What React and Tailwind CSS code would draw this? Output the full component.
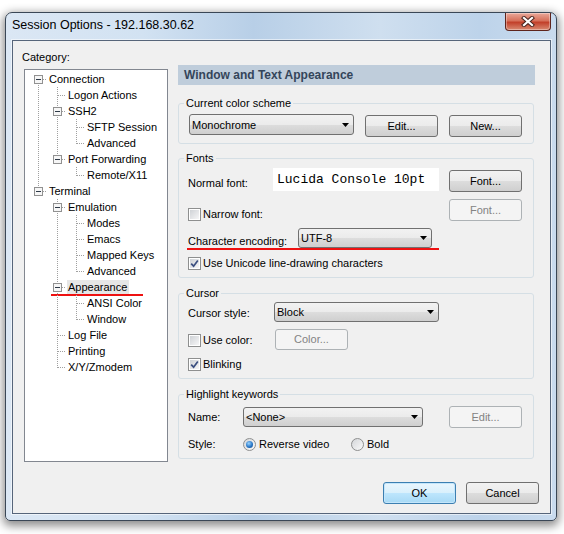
import React from 'react';

// Session Options dialog (Windows 7 look)

const treeRows = [
    { label: 'Connection', guides: [], join: 'first', box: true },
    { label: 'Logon Actions', guides: [true], join: 'tee' },
    { label: 'SSH2', guides: [true], join: 'tee', box: true },
    { label: 'SFTP Session', guides: [true, true], join: 'tee' },
    { label: 'Advanced', guides: [true, true], join: 'last' },
    { label: 'Port Forwarding', guides: [true], join: 'last', box: true },
    { label: 'Remote/X11', guides: [true, false], join: 'last' },
    { label: 'Terminal', guides: [], join: 'last', box: true },
    { label: 'Emulation', guides: [false], join: 'tee', box: true },
    { label: 'Modes', guides: [false, true], join: 'tee' },
    { label: 'Emacs', guides: [false, true], join: 'tee' },
    { label: 'Mapped Keys', guides: [false, true], join: 'tee' },
    { label: 'Advanced', guides: [false, true], join: 'last' },
    { label: 'Appearance', guides: [false], join: 'tee', box: true, selected: true },
    { label: 'ANSI Color', guides: [false, true], join: 'tee' },
    { label: 'Window', guides: [false, true], join: 'last' },
    { label: 'Log File', guides: [false], join: 'tee' },
    { label: 'Printing', guides: [false], join: 'tee' },
    { label: 'X/Y/Zmodem', guides: [false], join: 'last' },
];

const Guide = ({ on }) => (
    <svg width="19" height="16" className="shrink-0">
        {on && <line x1="10.5" y1="0" x2="10.5" y2="16" stroke="#a0a0a0" strokeDasharray="1 1" />}
    </svg>
);

const Joint = ({ join, box }) => {
    const y1 = join === 'first' ? 8 : 0;
    const y2 = join === 'last' ? 9 : 16;
    return (
        <svg width="19" height="16" className="shrink-0">
            <line x1="10.5" y1={y1} x2="10.5" y2={y2} stroke="#a0a0a0" strokeDasharray="1 1" />
            <line x1="11" y1="8.5" x2="19" y2="8.5" stroke="#a0a0a0" strokeDasharray="1 1" />
            {box && (
                <>
                    <rect x="6.5" y="4.5" width="8" height="8" fill="#f6f6f6" stroke="#919191" />
                    <line x1="8" y1="8.5" x2="13" y2="8.5" stroke="#2e3a48" />
                </>
            )}
        </svg>
    );
};

const TreeRow = ({ row }) => (
    <div className="relative flex h-[16px] items-center pl-[3px]">
        {row.guides.map((g, i) => <Guide key={i} on={g} />)}
        <Joint join={row.join} box={row.box} />
        <span className={`ml-[1px] pl-[1px] pr-[2px] leading-[14px] whitespace-nowrap ${row.selected ? 'bg-[#e6e6e6]' : ''}`}>
            {row.label}
        </span>
        {row.selected && <div className="absolute left-[26px] top-[15px] h-[2px] w-[92px] bg-[#ee1111]" />}
    </div>
);

const Combo = ({ value, className }) => (
    <div className={`flex items-center justify-between rounded-[3px] border border-[#707070] bg-[linear-gradient(#f2f2f2,#ebebeb_50%,#dddddd_50%,#cfcfcf)] pl-[2px] pr-[4px] ${className}`}>
        <span className="leading-[14px]">{value}</span>
        <svg width="7" height="4" className="shrink-0"><path d="M0 0H7L3.5 4Z" fill="#000" /></svg>
    </div>
);

const Button = ({ children, kind = 'normal', className }) => {
    const kinds = {
        normal: 'border-[#707070] bg-[linear-gradient(#f2f2f2,#ebebeb_50%,#dddddd_50%,#cfcfcf)] text-black',
        disabled: 'border-[#adb2b5] bg-[#f4f4f4] text-[#838383]',
        default: 'border-[#3c7fb1] bg-[linear-gradient(#eaf6fd,#d9f0fc_50%,#bee6fd_50%,#a7d9f5)] text-black shadow-[inset_0_0_0_1px_#c4e6fb]',
    };
    return (
        <div className={`flex items-center justify-center rounded-[3px] border ${kinds[kind]} ${className}`}>
            {children}
        </div>
    );
};

const Check = ({ checked, label }) => (
    <div className="flex items-center">
        <div className="h-[13px] w-[13px] shrink-0 border border-[#8e8f8f] bg-white p-[1px]">
            <div className="flex h-full w-full items-center justify-center bg-[linear-gradient(135deg,#cfd2d6,#f6f6f7)]">
                {checked && (
                    <svg width="9" height="9">
                        <path d="M1.2 4.6L3.6 7.2L7.8 1.4" fill="none" stroke="#3b4f80" strokeWidth="1.7" />
                    </svg>
                )}
            </div>
        </div>
        <span className="ml-[2px] leading-[13px]">{label}</span>
    </div>
);

const Radio = ({ on, label, className }) => (
    <div className={`flex items-center ${className}`}>
        <div className="flex h-[13px] w-[13px] shrink-0 items-center justify-center rounded-full border border-[#8e8f8f] bg-[linear-gradient(135deg,#d4d6d9,#fafafa)]">
            {on && <div className="h-[7px] w-[7px] rounded-full bg-[radial-gradient(circle_at_40%_35%,#9ad4ff,#2a78c8_55%,#0b3f80)]" />}
        </div>
        <span className="ml-[3px] leading-[13px]">{label}</span>
    </div>
);

const Group = ({ title, className, children }) => (
    <div className={`relative w-[356px] rounded-[3px] border border-[#d5dfe5] ${className}`}>
        <span className="absolute left-[5px] top-[-8px] bg-[#f0f0f0] px-[2px] leading-[14px]">{title}</span>
        {children}
    </div>
);

const CloseButton = () => (
    <div className="mr-[5px] flex h-[18px] w-[46px] items-center justify-center rounded-b-[4px] border border-t-0 border-[#5e241c] bg-[linear-gradient(#eaa99a,#d6705a_45%,#c2402a_55%,#d98a72)] shadow-[inset_0_0_0_1px_rgba(255,255,255,0.35)]">
        <svg width="14" height="11">
            <path d="M3 2L11 9M11 2L3 9" stroke="#4a2620" strokeWidth="4.2" strokeLinecap="square" />
            <path d="M3 2L11 9M11 2L3 9" stroke="#ffffff" strokeWidth="2.2" strokeLinecap="square" />
        </svg>
    </div>
);

export default function App() {
    return (
        <div className="h-[534px] w-[564px] overflow-hidden bg-white pl-[5px] pt-[12px] font-['Liberation_Sans',Arial,sans-serif] text-[11px] text-black">
            <div className="flex h-[509px] w-[552px] flex-col rounded-t-[7px] rounded-b-[5px] border border-[#3a4756] bg-[linear-gradient(90deg,#dbe7f4,#d2e2f2_25%,#b8cfe7_45%,#cfdfef_68%,#bdd3ea_86%,#c9dbee)] shadow-[0_3px_10px_2px_rgba(0,0,0,0.45)]">
                {/* Title bar */}
                <div className="flex h-[27px] items-start justify-between">
                    <span className="ml-[6px] mt-[4px] text-[12.5px] leading-[16px]">Session Options - 192.168.30.62</span>
                    <CloseButton />
                </div>

                {/* Client area */}
                <div className="ml-[6px] flex h-[474px] w-[539px] flex-col border border-[#56657a] bg-[#f0f0f0] shadow-[0_0_0_1px_rgba(255,255,255,0.55)]">
                    <div className="flex">
                        {/* Category tree */}
                        <div className="pl-[9px] pt-[9px]">
                            <div className="leading-[14px]">Category:</div>
                            <div className="ml-[2px] mt-[5px] h-[393px] w-[144px] border border-[#828790] bg-white pt-[1px]">
                                {treeRows.map((row, i) => <TreeRow key={i} row={row} />)}
                            </div>
                        </div>

                        {/* Settings panel */}
                        <div className="ml-[10px] w-[357px] pt-[24px]">
                            <div className="flex h-[20px] items-center bg-[#bfcddb] pl-[6px] text-[12px] font-bold text-[#34455a]">
                                Window and Text Appearance
                            </div>

                            <Group title="Current color scheme" className="mt-[18px] h-[41px] pl-[10px] pt-[10px]">
                                <div className="flex items-start">
                                    <Combo value="Monochrome" className="h-[21px] w-[165px]" />
                                    <Button className="ml-[11px] mt-[1px] h-[22px] w-[73px]">Edit...</Button>
                                    <Button className="ml-[11px] mt-[1px] h-[22px] w-[73px]">New...</Button>
                                </div>
                            </Group>

                            <Group title="Fonts" className="mt-[14px] h-[120px] pl-[9px] pr-[11px] pt-[9px]">
                                <div className="flex items-start">
                                    <span className="mt-[8px] w-[85px] leading-[14px]">Normal font:</span>
                                    <div className="flex h-[23px] w-[166px] items-center bg-white pl-[4px] font-['Liberation_Mono',monospace] text-[13px]">
                                        Lucida Console 10pt
                                    </div>
                                    <Button className="ml-[10px] mt-[2px] h-[22px] w-[73px]">Font...</Button>
                                </div>
                                <div className="mt-[7px] flex items-start justify-between">
                                    <div className="mt-[9px]"><Check label="Narrow font:" /></div>
                                    <Button kind="disabled" className="h-[22px] w-[73px]">Font...</Button>
                                </div>
                                <div className="relative mt-[7px] flex items-start">
                                    <span className="mt-[6px] w-[110px] leading-[14px]">Character encoding:</span>
                                    <Combo value="UTF-8" className="h-[20px] w-[134px]" />
                                    <div className="absolute left-[-1px] top-[20px] h-[2px] w-[252px] bg-[#ee1111]" />
                                </div>
                                <div className="mt-[9px]"><Check checked label="Use Unicode line-drawing characters" /></div>
                            </Group>

                            <Group title="Cursor" className="mt-[15px] h-[86px] pl-[9px] pr-[11px] pt-[8px]">
                                <div className="flex items-start">
                                    <span className="mt-[4px] w-[86px] leading-[14px]">Cursor style:</span>
                                    <Combo value="Block" className="h-[20px] w-[165px]" />
                                </div>
                                <div className="mt-[7px] flex items-start">
                                    <div className="mt-[5px] w-[87px]"><Check label="Use color:" /></div>
                                    <Button kind="disabled" className="h-[21px] w-[73px]">Color...</Button>
                                </div>
                                <div className="mt-[8px]"><Check checked label="Blinking" /></div>
                            </Group>

                            <Group title="Highlight keywords" className="mt-[15px] h-[65px] pl-[9px] pr-[11px] pt-[11px]">
                                <div className="flex items-start">
                                    <span className="mt-[4px] w-[55px] leading-[14px]">Name:</span>
                                    <Combo value="<None>" className="mt-[1px] h-[20px] w-[180px]" />
                                    <Button kind="disabled" className="ml-auto h-[22px] w-[73px]">Edit...</Button>
                                </div>
                                <div className="mt-[10px] flex items-center">
                                    <span className="w-[55px] leading-[13px]">Style:</span>
                                    <Radio on label="Reverse video" className="w-[108px]" />
                                    <Radio label="Bold" />
                                </div>
                            </Group>
                        </div>
                    </div>

                    <div className="mt-[20px] flex justify-end gap-[10px] pr-[11px]">
                        <Button kind="default" className="h-[22px] w-[73px]">OK</Button>
                        <Button className="h-[22px] w-[73px]">Cancel</Button>
                    </div>
                </div>
            </div>
        </div>
    );
}
